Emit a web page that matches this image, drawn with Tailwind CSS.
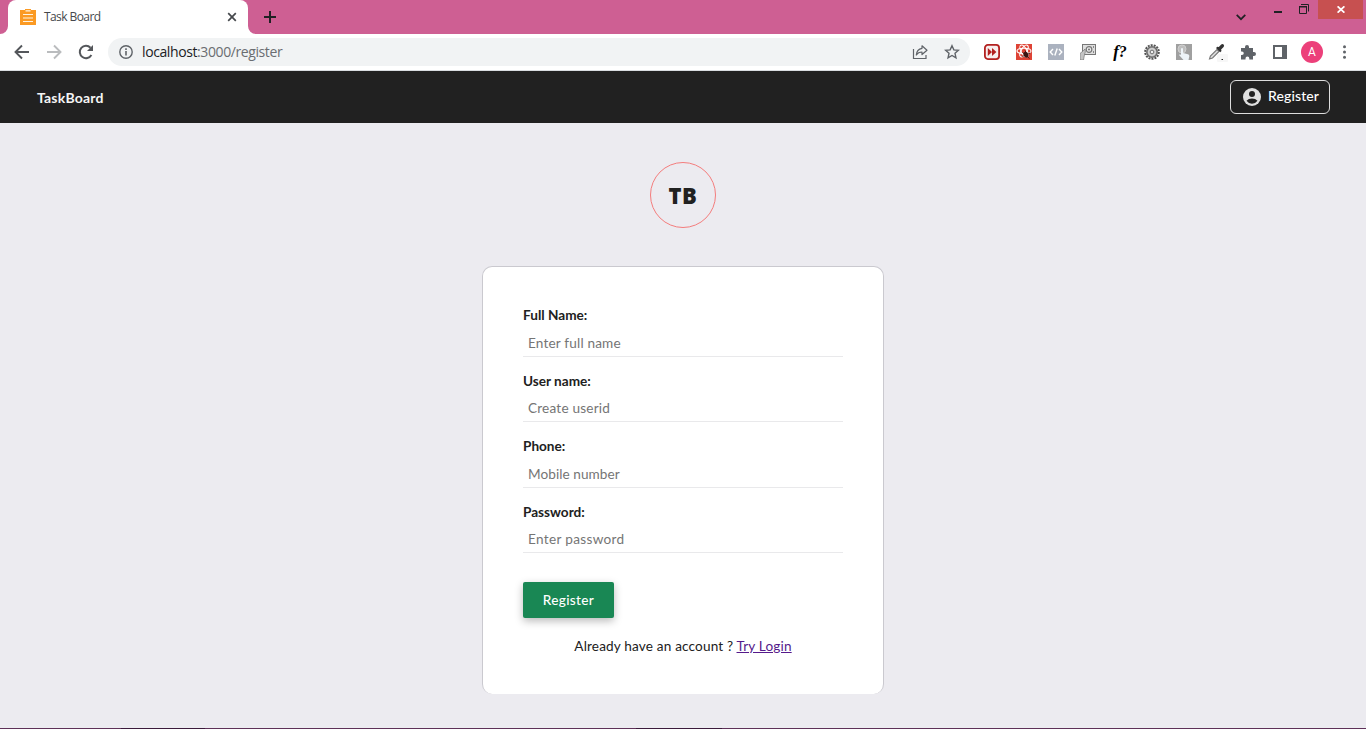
<!DOCTYPE html>
<html lang="en">
<head>
<meta charset="utf-8">
<title>Task Board</title>
<script src="https://cdn.jsdelivr.net/npm/@tailwindcss/browser@4"></script>
</head>
<body class="w-[1366px] h-[729px] overflow-hidden flex flex-col bg-[#ecebf0] font-['Lato',sans-serif] text-[#212121]">

<!-- Tab strip -->
<div class="h-[34px] shrink-0 bg-[#ce5f93] flex items-start">
  <svg class="w-2 h-[34px] shrink-0" viewBox="0 0 8 34"><path d="M8 26a8 8 0 0 1-8 8h8z" fill="#fff"/></svg>
  <div class="w-60 h-[34px] bg-white rounded-t-lg flex items-center pl-3 pr-[11px]">
    <svg class="size-4" viewBox="0 0 16 16"><path d="M0 1h5V0h6v1h5v15H0z" fill="#fb9a23"/><path d="M5.500 1.800h5M3 5.500h10M3 9h10M3 12.500h10" stroke="#fff3e0" stroke-width="1.200"/></svg>
    <span class="ml-2 text-xs leading-4 text-[#45484c] font-['Open_Sans',sans-serif] tracking-[-0.58px] word-spacing-normal whitespace-nowrap">Task Board</span>
    <svg class="size-[10px] ml-auto" viewBox="0 0 10 10"><path d="M1.200 1.200l7.600 7.600M8.800 1.200l-7.600 7.600" stroke="#45484c" stroke-width="1.700"/></svg>
  </div>
  <svg class="w-2 h-[34px] shrink-0" viewBox="0 0 8 34"><path d="M0 26a8 8 0 0 0 8 8H0z" fill="#fff"/></svg>
  <svg class="size-3 ml-2 mt-[11px]" viewBox="0 0 12 12"><path d="M6 0v12M0 6h12" stroke="#202124" stroke-width="2"/></svg>
  <svg class="w-[10px] h-[7px] ml-auto mt-[14px]" viewBox="0 0 10 7"><path d="M.700.900L5 5.200 9.300.900" fill="none" stroke="#202124" stroke-width="1.700"/></svg>
  <div class="w-2 h-[2px] bg-[#202124] ml-7 mt-[11px]"></div>
  <svg class="w-[10px] h-[10px] ml-[17px] mt-1" viewBox="0 0 10 10"><path d="M.500 3h7v6.500h-7zM2 .500h7.500v7" fill="none" stroke="#202124"/><path d="M0 2.500h8" stroke="#202124"/></svg>
  <div class="w-[45px] h-[19px] ml-[9px] mr-[3px] bg-[#c75050] flex items-center justify-center">
    <svg class="w-2 h-[7px]" viewBox="0 0 8 7"><path d="M.600.300l6.800 6.400M7.400.300L.600 6.700" stroke="#fff" stroke-width="1.700"/></svg>
  </div>
</div>

<!-- Toolbar -->
<div class="h-[37px] shrink-0 bg-white border-b border-[#d9dde0] flex items-center">
  <svg class="w-4 h-4 ml-[14px]" viewBox="0 0 16 16"><path d="M15 8H2M8 1.500L1.500 8 8 14.500" fill="none" stroke="#54575b" stroke-width="1.900"/></svg>
  <svg class="w-4 h-4 ml-4" viewBox="0 0 16 16"><path d="M1 8h13M8 1.500L14.500 8 8 14.500" fill="none" stroke="#babcbe" stroke-width="1.900"/></svg>
  <svg class="w-4 h-4 ml-4" viewBox="0 0 16 16"><path d="M13.400 11A6.200 6.200 0 1 1 12.500 3.700" fill="none" stroke="#54575b" stroke-width="2"/><path d="M15 1v6H9z" fill="#54575b"/></svg>
  <div class="ml-[14px] w-[862px] h-7 rounded-full bg-[#f1f3f4] flex items-center pl-[11px] pr-[10px]">
    <svg class="size-[14px]" viewBox="0 0 14 14"><circle cx="7" cy="7" r="6.200" fill="none" stroke="#5f6368" stroke-width="1.400"/><path d="M7 6v4.500M7 3.300v1.600" stroke="#5f6368" stroke-width="1.600"/></svg>
    <span class="ml-[9px] text-sm leading-5 font-['Open_Sans',sans-serif] tracking-[-0.4px] text-[#6a6d71] whitespace-nowrap"><span class="text-[#202124]">localhost</span>:3000/register</span>
    <svg class="size-4 ml-auto" viewBox="0 0 16 16"><path d="M1.500 5v9.500h12.500V11" fill="none" stroke="#5f6368" stroke-width="1.200"/><path d="M10 1.800L15 6.200 10 10.500V8C7.500 8 5.600 8.900 4.300 11 4.600 7.200 6.500 4.900 10 4.300z" fill="none" stroke="#5f6368" stroke-width="1.200" stroke-linejoin="round"/></svg>
    <svg class="size-4 ml-4" viewBox="0 0 16 16"><path d="M8 1.700l1.850 4.150 4.550.450-3.400 3.050.950 4.450L8 11.500l-3.950 2.300.950-4.450L1.600 6.300l4.550-.450z" fill="none" stroke="#5f6368" stroke-width="1.400"/></svg>
  </div>
  <svg class="size-4 ml-[14px]" viewBox="0 0 16 16"><rect x=".900" y=".900" width="14.200" height="14.200" rx="3" fill="#f7eeee" stroke="#b3201f" stroke-width="1.800"/><path d="M3.800 4L8 8l-4.200 4zM8 4l4.400 4L8 12z" fill="#b3201f"/></svg>
  <svg class="size-4 ml-4" viewBox="0 0 16 16"><path d="M0 0h16v16H0z" fill="#de4335"/><g fill="none" stroke="#fff" stroke-width="1.100"><ellipse cx="8" cy="7" rx="7" ry="2.800"/><ellipse cx="8" cy="7" rx="6.600" ry="2.800" transform="rotate(60 8 7)"/><ellipse cx="8" cy="7" rx="6.600" ry="2.800" transform="rotate(120 8 7)"/></g><ellipse cx="10" cy="10.800" rx="2.300" ry="3" fill="#3a1512" transform="rotate(-25 10 10.800)"/><path d="M6.500 8.500l7 6M6.300 12.500l8-3.500M9 6.500l1 2" stroke="#3a1512" stroke-width=".900"/></svg>
  <svg class="size-4 ml-4" viewBox="0 0 16 16"><path d="M0 0h16v16H0z" fill="#abb2bf"/><path d="M5 5L2.200 8 5 11M11 5l2.800 3L11 11M9.200 4.500l-2.400 7" fill="none" stroke="#fff" stroke-width="1.400"/></svg>
  <svg class="size-4 ml-4" viewBox="0 0 16 16"><rect x="2.500" y=".500" width="13" height="10" fill="#dedede" stroke="#777"/><circle cx="9" cy="5.500" r="2.800" fill="#eee" stroke="#777" stroke-width="1.200"/><circle cx="9" cy="5.500" r=".900" fill="#666"/><path d="M13.500 2v2M13.500 7v2" stroke="#888"/><path d="M0 16V9.500L3 7l2-2 .300 3-.800 2.500L3.500 16z" fill="#c4c4c4" stroke="#777" stroke-width=".700"/></svg>
  <span class="w-5 ml-[14px] text-center text-[17px] leading-4 italic font-bold font-['Liberation_Serif',serif] text-black whitespace-nowrap -mt-px">f<span class="text-base">?</span></span>
  <svg class="size-4 ml-[14px]" viewBox="0 0 16 16"><circle cx="8" cy="8" r="6.800" fill="none" stroke="#555" stroke-width="2" stroke-dasharray="2 1.050"/><circle cx="8" cy="8" r="5.200" fill="#b9b9b9" stroke="#6a6a6a" stroke-width="1.500"/><circle cx="8" cy="8" r="3.300" fill="none" stroke="#ddd"/><circle cx="8" cy="8" r="1.800" fill="#eee" stroke="#777"/></svg>
  <svg class="size-4 ml-4" viewBox="0 0 16 16"><path d="M0 0h16v16H0z" fill="#a0a0a0"/><circle cx="6" cy="5" r="4" fill="#bebebe" stroke="#cfcfcf"/><path d="M5 4.500q1-1 2 0V9l5 1.200q1.500.500 1.300 2L12.500 16h-5L3 11l1-.800L5 11z" fill="#edf3f8"/></svg>
  <svg class="size-5 ml-4" viewBox="0 0 20 20"><path d="M1.500 17l.900-3L9 7.500l2 2L4.500 16z" fill="#ddd" stroke="#777" stroke-width="1.100"/><path d="M8 6l1.300-1.300 1.500.300 2.400-2.500q1.300-1 2.400 0 1 1.100 0 2.500l-2.500 2.400.400 1.600L12.200 10.300z" fill="#333"/><rect x="9" y="12" width="11" height="8" rx="1" fill="#f7f7f7"/><path d="M13.500 17.500h1.500" stroke="#222"/></svg>
  <svg class="size-4 ml-3" viewBox="0 0 16 16"><path d="M1 4h4V3a2 2 0 0 1 4 0v1h4v4h1a2 2 0 0 1 0 4h-1v3.500H9.300V14.500a1.900 1.900 0 0 0-3.800 0v1H1V11h1a1.700 1.700 0 0 0 0-3.500H1z" fill="#5f6368"/></svg>
  <svg class="w-[14px] h-[14px] ml-[17px]" viewBox="0 0 14 14"><path d="M1 1h12v12H1z" fill="#fff" stroke="#5f6368" stroke-width="2"/><path d="M9 0h5v14H9z" fill="#5f6368"/></svg>
  <div class="size-[22px] ml-[14px] rounded-full bg-[#ec407a] text-white text-xs font-['Roboto',sans-serif] flex items-center justify-center">A</div>
  <svg class="w-[3px] h-[14px] ml-5" viewBox="0 0 3 14"><g fill="#5f6368"><circle cx="1.500" cy="1.800" r="1.500"/><circle cx="1.500" cy="7" r="1.500"/><circle cx="1.500" cy="12.200" r="1.500"/></g></svg>
</div>

<!-- Site header -->
<header class="h-[52px] shrink-0 bg-[#212121] flex items-center justify-between pl-[37px] pr-9">
  <a class="text-sm leading-5 font-bold text-[#f5f5f5] mt-px tracking-[0.2px] whitespace-nowrap">TaskBoard</a>
  <a class="w-[100px] h-[34px] rounded-md border border-[#dedede] flex items-center pl-3 text-white">
    <svg class="size-[18px]" viewBox="0 0 18 18"><circle cx="9" cy="9" r="9" fill="#e0e0e0"/><circle cx="9" cy="6" r="3" fill="#212121"/><path d="M3.500 12.800Q5.500 10.500 9 10.500t5.500 2.300Q12.500 15.700 9 15.700t-5.500-2.900z" fill="#212121"/></svg>
    <span class="ml-[7px] text-sm leading-5 font-medium tracking-[0.12px] whitespace-nowrap -mt-[3px]">Register</span>
  </a>
</header>

<!-- Page -->
<main class="flex-1 min-h-0 flex flex-col items-center">
  <div class="mt-[39px] size-[66px] shrink-0 rounded-full border border-[#f47d7d] flex items-center justify-center text-[22px] leading-none font-extrabold tracking-[0.5px] pb-px font-['Open_Sans',sans-serif]">TB</div>
  <form class="mt-[38px] w-[402px] h-[428px] shrink-0 bg-white border border-b-0 border-[#cac9cf] rounded-[10px] px-10 pt-[38px] flex flex-col text-[13.6px]">
    <div class="h-[66px] shrink-0 flex flex-col"><label class="leading-5 font-bold self-start">Full Name:</label><input class="h-8 w-full px-[5px] pt-[5px] border-b border-[#e9e9eb] tracking-[0.17px] placeholder:text-[#757575] outline-none" placeholder="Enter full name"></div>
    <div class="h-[65px] shrink-0 flex flex-col"><label class="leading-5 font-bold self-start">User name:</label><input class="h-[31px] w-full px-[5px] pt-[3px] border-b border-[#e9e9eb] tracking-[0.2px] placeholder:text-[#757575] outline-none" placeholder="Create userid"></div>
    <div class="h-[66px] shrink-0 flex flex-col"><label class="leading-5 font-bold self-start">Phone:</label><input class="h-8 w-full px-[5px] pt-[5px] border-b border-[#e9e9eb] tracking-[0.06px] placeholder:text-[#757575] outline-none" placeholder="Mobile number"></div>
    <div class="h-[65px] shrink-0 flex flex-col"><label class="leading-5 font-bold self-start">Password:</label><input type="password" class="h-[31px] w-full px-[5px] pt-[3px] border-b border-[#e9e9eb] tracking-[0.32px] placeholder:text-[#757575] outline-none" placeholder="Enter password"></div>
    <button type="button" class="mt-[15px] w-[91px] h-9 shrink-0 rounded-[2px] bg-[#198754] text-white font-medium tracking-[0.32px] shadow-[0_3px_8px_rgba(0,0,0,0.28)]">Register</button>
    <p class="mt-[18px] leading-5 text-center tracking-[0.16px] whitespace-nowrap"><span>Already have an account ?</span> <a class="text-[#551a8b] underline">Try Login</a></p>
  </form>
</main>
<div class="h-px shrink-0 bg-[#5e3058] flex"><div class="w-[84px] ml-[121px] bg-[#3b1a3b]"></div><div class="w-[86px] ml-[431px] bg-[#3b1a3b]"></div></div>
</body>
</html>
